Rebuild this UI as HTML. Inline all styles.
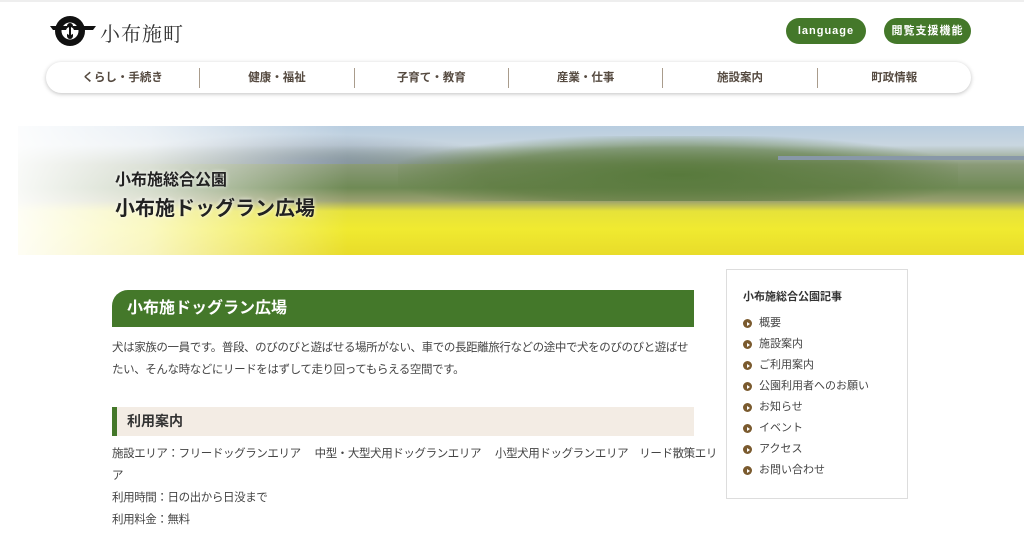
<!DOCTYPE html>
<html><head><meta charset="utf-8"><style>
*{margin:0;padding:0;box-sizing:border-box}
body{width:1024px;height:536px;overflow:hidden;background:#fff;font-family:"Liberation Sans","Noto Sans CJK JP",sans-serif;color:#333;position:relative}
.abs{position:absolute}
.btn{position:absolute;top:18px;height:26px;border-radius:13px;background:#44782a;color:#fff;font-size:11px;font-weight:bold;line-height:26px;text-align:center;letter-spacing:1px}
.nav{left:46px;top:62px;width:925px;height:31px;border-radius:16px;background:#fff;box-shadow:0 1px 4px rgba(0,0,0,.25);display:flex;align-items:center}
.nav div{flex:1;text-align:center;font-size:11.5px;font-weight:bold;color:#554a40;border-left:1px solid #a99c8c;line-height:20px}
.nav div:first-child{border-left:none}
.p{font-size:11.5px;line-height:22px;color:#444;white-space:nowrap;letter-spacing:-0.4px}
.side li{list-style:none;font-size:11px;color:#444;height:21px;line-height:21px;position:relative;padding-left:16px}
.side li:before{content:"";position:absolute;left:0;top:6px;width:9px;height:9px;border-radius:50%;background:#7a5a2e}
.side li:after{content:"";position:absolute;left:3.5px;top:8.5px;border-left:3px solid #fff;border-top:2px solid transparent;border-bottom:2px solid transparent}
</style></head><body>
<div class="abs" style="left:0;top:0;width:1024px;height:2px;background:#eee"></div>
<svg class="abs" style="left:48px;top:13px" width="50" height="36" viewBox="0 0 50 36">
<circle cx="22" cy="18" r="15" fill="#111"/><circle cx="22" cy="18" r="8.5" fill="#fff"/>
<path d="M2 13h46l-3 4H5z" fill="#111"/><rect x="19" y="10" width="6" height="16" rx="3" fill="#111"/>
<circle cx="22" cy="18" r="4" fill="#fff"/><rect x="21" y="12" width="2" height="12" fill="#111"/></svg>
<div class="abs" style="left:100px;top:18px;font-size:20px;font-family:'Noto Serif CJK SC',serif;color:#333;letter-spacing:1px">小布施町</div>
<div class="btn" style="left:786px;width:80px">language</div>
<div class="btn" style="left:884px;width:87px">閲覧支援機能</div>
<div class="abs nav"><div>くらし・手続き</div><div>健康・福祉</div><div>子育て・教育</div><div>産業・仕事</div><div>施設案内</div><div>町政情報</div></div>
<div class="abs" style="left:18px;top:126px;width:1006px;height:129px;overflow:hidden;background:linear-gradient(180deg,#b8cde0 0%,#c9d6e0 15%,#8a9a78 30%,#6f8a55 48%,#9aa070 58%,#e6e23a 66%,#f0ea30 80%,#e8dc2a 100%)">
<div class="abs" style="left:80px;top:8px;width:420px;height:30px;background:radial-gradient(ellipse at 50% 100%,#8796a8 0%,transparent 70%)"></div>
<div class="abs" style="left:380px;top:10px;width:560px;height:65px;background:radial-gradient(ellipse at 50% 60%,#587a3c 0%,rgba(90,120,60,.6) 50%,transparent 75%)"></div>
<div class="abs" style="left:760px;top:30px;width:246px;height:4px;background:#8898a8"></div>
<div class="abs" style="left:0;top:0;width:330px;height:129px;background:linear-gradient(90deg,rgba(255,255,255,.95) 0%,rgba(255,255,255,.7) 40%,rgba(255,255,255,0) 100%)"></div>
<div class="abs" style="left:97px;top:40px;font-size:16px;font-weight:bold;color:#222;text-shadow:0 0 4px #fff">小布施総合公園</div>
<div class="abs" style="left:97px;top:66px;font-size:20px;font-weight:bold;color:#222;text-shadow:0 0 4px #fff">小布施ドッグラン広場</div>
</div>
<div class="abs" style="left:112px;top:290px;width:582px;height:37px;background:#44782a;border-radius:16px 0 0 0;color:#fff;font-size:16px;font-weight:bold;line-height:37px;padding-left:15px">小布施ドッグラン広場</div>
<div class="abs p" style="left:112px;top:337px">犬は家族の一員です。普段、のびのびと遊ばせる場所がない、車での長距離旅行などの途中で犬をのびのびと遊ばせ<br>たい、そんな時などにリードをはずして走り回ってもらえる空間です。</div>
<div class="abs" style="left:112px;top:407px;width:582px;height:29px;background:#f3ece4;border-left:5px solid #44782a;font-size:14px;font-weight:bold;line-height:29px;padding-left:10px;color:#333">利用案内</div>
<div class="abs p" style="left:112px;top:443px">施設エリア：フリードッグランエリア　 中型・大型犬用ドッグランエリア　 小型犬用ドッグランエリア　リード散策エリ<br>ア<br>利用時間：日の出から日没まで<br>利用料金：無料</div>
<div class="abs side" style="left:726px;top:269px;width:182px;height:230px;border:1px solid #ddd">
<div style="position:absolute;left:16px;top:18px;font-size:11px;font-weight:bold;color:#333">小布施総合公園記事</div>
<ul style="position:absolute;left:16px;top:43px">
<li>概要</li><li>施設案内</li><li>ご利用案内</li><li>公園利用者へのお願い</li><li>お知らせ</li><li>イベント</li><li>アクセス</li><li>お問い合わせ</li></ul></div>
</body></html>
